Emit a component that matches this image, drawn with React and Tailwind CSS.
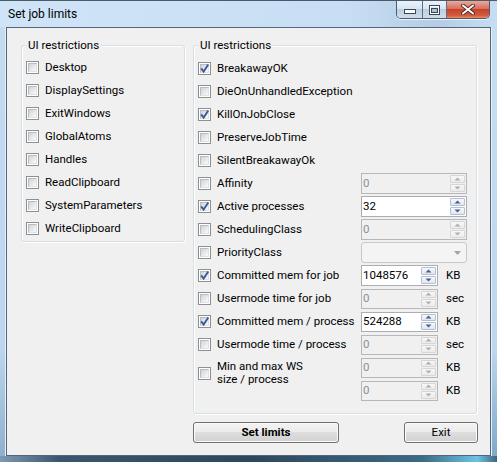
import React from 'react';

function Check({ on }) {
  return (
    <span className="relative block w-[13px] h-[13px] shrink-0 border border-[#8e8f8f] bg-white p-[1px]">
      <span className="block w-full h-full border border-t-[#b9bdc3] border-l-[#b9bdc3] border-r-[#dfe1e4] border-b-[#dfe1e4] bg-[linear-gradient(135deg,#cfd3d8_0%,#e7e9ec_55%,#fafafa_100%)]" />
      {on && (
        <svg className="absolute -left-px -top-px" width="13" height="13" viewBox="0 0 13 13">
          <path d="M3.2 6.4 L5.6 9.6 L10.3 2.6" fill="none" stroke="#3b5797" strokeWidth="1.8" strokeLinejoin="miter" />
        </svg>
      )}
    </span>
  );
}

function Arrow({ up, on }) {
  return (
    <span
      className={`flex-1 flex items-center justify-center rounded-[1px] border ${
        on
          ? 'border-[#b4c0d2] bg-[linear-gradient(to_bottom,#f7f9fc,#dfe6ef)]'
          : 'border-[#d6d6d6] bg-[linear-gradient(to_bottom,#f8f8f8,#ebebeb)]'
      }`}
    >
      <svg width="7" height="4" viewBox="0 0 7 4">
        <path d={up ? 'M0.5 3.5 L3.5 0.5 L6.5 3.5Z' : 'M0.5 0.5 L6.5 0.5 L3.5 3.5Z'} fill={on ? '#4a5f8c' : '#b0b0b0'} />
      </svg>
    </span>
  );
}

function Spin({ v, on, narrow, tall }) {
  return (
    <div
      className={`flex ${narrow ? 'w-[77px]' : 'w-[106px]'} ${tall ? 'h-[21px]' : 'h-[20px]'} border ${
        on ? 'border-[#abadb3] bg-white text-black' : 'border-[#b7b7b7] bg-[#f0f0f0] text-[#8f8f8f]'
      }`}
    >
      <span className="flex-1 pl-[1px] flex items-center">{v}</span>
      <span className="flex flex-col w-[15px] mr-[1px] my-[1px] gap-[1px]">
        <Arrow up on={on} />
        <Arrow on={on} />
      </span>
    </div>
  );
}

function Combo() {
  return (
    <div className="w-[106px] h-[21px] rounded-[3px] border border-[#c8c8c8] bg-[#f4f4f4] flex items-center justify-end pr-[5px]">
      <svg width="7" height="4" viewBox="0 0 7 4">
        <path d="M0 0 L7 0 L3.5 4Z" fill="#a3a3a3" />
      </svg>
    </div>
  );
}

function Row({ label, on, children, unit }) {
  return (
    <div className="flex items-center h-[23px]">
      <Check on={on} />
      <span className="ml-[6px] w-[144px] whitespace-nowrap">{label}</span>
      {children}
      {unit && <span className="ml-[8px]">{unit}</span>}
    </div>
  );
}

function Group({ className, children }) {
  return (
    <div className={`relative border border-[#d5dfe5] rounded-[3px] shadow-[inset_1px_1px_0_#ffffff,1px_1px_0_#ffffff] ${className}`}>
      <span className="absolute -top-[9px] left-[4px] px-[2px] leading-[16px] bg-[#f0f0f0] whitespace-nowrap">UI restrictions</span>
      {children}
    </div>
  );
}

const leftItems = ['Desktop', 'DisplaySettings', 'ExitWindows', 'GlobalAtoms', 'Handles', 'ReadClipboard', 'SystemParameters', 'WriteClipboard'];

const btnBase =
  'h-[21px] rounded-[3px] border border-[#707070] bg-[linear-gradient(to_bottom,#f3f3f3_0%,#ececec_45%,#dedede_50%,#d0d0d0_100%)] shadow-[inset_0_0_0_1px_#fbfbfb] text-black flex items-center justify-center';

export default function App() {
  return (
    <div className="w-[497px] h-[462px] flex flex-col border-t border-[#4b5a69] bg-[linear-gradient(to_bottom,#cbe1f5_0%,#c2dbf1_40%,#b9d4ec_100%)] font-['Roboto',sans-serif] text-[11.5px] text-black overflow-hidden">
      {/* title bar */}
      <div className="h-[26px] flex justify-between items-start bg-[linear-gradient(to_right,#cfe4f7_0%,#c8def4_70%,#b4cde4_88%,#c6def3_100%)]">
        <span className="ml-[8px] mt-[5px] leading-[16px] text-[12px]">Set job limits</span>
        <div className="mr-[7px] flex h-[18px] rounded-b-[5px] border border-t-0 border-[#4c5c6d] overflow-hidden shadow-[0_1px_0_rgba(255,255,255,0.75)]">
          <div className="w-[26px] flex items-end justify-center pb-[4px] border-r border-[#5f6f80] bg-[linear-gradient(to_bottom,#eaf2fa_0%,#d8e6f3_45%,#bccfe1_50%,#cddded_100%)]">
            <svg width="12" height="5" viewBox="0 0 12 5">
              <rect x="0.5" y="0.5" width="11" height="4" fill="#ffffff" stroke="#3a4756" />
            </svg>
          </div>
          <div className="w-[24px] flex items-center justify-center border-r border-[#5f6f80] bg-[linear-gradient(to_bottom,#eaf2fa_0%,#d8e6f3_45%,#bccfe1_50%,#cddded_100%)]">
            <svg width="11" height="10" viewBox="0 0 11 10">
              <rect x="0.5" y="0.5" width="10" height="9" fill="none" stroke="#3a4756" />
              <rect x="1.5" y="1.5" width="8" height="7" fill="none" stroke="#ffffff" />
              <rect x="2.5" y="3.5" width="6" height="4" fill="#aebfd0" stroke="#3a4756" />
            </svg>
          </div>
          <div className="w-[42px] flex items-center justify-center bg-[linear-gradient(to_bottom,#e9a99c_0%,#d6705c_45%,#c5432b_50%,#d45b3f_85%,#e88a6f_100%)]">
            <svg width="14" height="11" viewBox="0 0 14 11">
              <path d="M2 1.5 L12 9.5 M12 1.5 L2 9.5" stroke="#4a2a24" strokeWidth="3.6" strokeLinecap="square" />
              <path d="M2 1.5 L12 9.5 M12 1.5 L2 9.5" stroke="#ffffff" strokeWidth="1.8" strokeLinecap="square" />
            </svg>
          </div>
        </div>
      </div>

      {/* middle */}
      <div className="flex-1 flex">
        <div className="w-[6px] bg-[linear-gradient(to_bottom,#c4dcf2_0%,#bcd6ee_75%,#8fb0cc_100%)] border-r border-[#e4f0fa]" />
        <div className="flex-1 border border-[#55657a] bg-[#f0f0f0]">
          <div className="pl-[14px] pt-[17px] grid grid-cols-[164px_285px] gap-x-[8px] items-start">
            <Group className="w-[164px] pt-[10px] pl-[4px] pb-[1px]">
              {leftItems.map((t) => (
                <div key={t} className="flex items-center h-[23px]">
                  <Check />
                  <span className="ml-[6px] whitespace-nowrap">{t}</span>
                </div>
              ))}
            </Group>

            <Group className="w-[284px] pt-[11px] pl-[4px] pb-[11px]">
              <Row label="BreakawayOK" on />
              <Row label="DieOnUnhandledException" />
              <Row label="KillOnJobClose" on />
              <Row label="PreserveJobTime" />
              <Row label="SilentBreakawayOk" />
              <Row label="Affinity">
                <Spin v="0" tall />
              </Row>
              <Row label="Active processes" on>
                <Spin v="32" on tall />
              </Row>
              <Row label="SchedulingClass">
                <Spin v="0" tall />
              </Row>
              <Row label="PriorityClass">
                <Combo />
              </Row>
              <Row label="Committed mem for job" on unit="KB">
                <Spin v="1048576" on narrow tall />
              </Row>
              <Row label="Usermode time for job" unit="sec">
                <Spin v="0" narrow />
              </Row>
              <Row label="Committed mem / process" on unit="KB">
                <Spin v="524288" on narrow />
              </Row>
              <Row label="Usermode time / process" unit="sec">
                <Spin v="0" narrow />
              </Row>
              <div className="flex h-[46px]">
                <div className="flex items-center h-[26px] mt-[4px]">
                  <Check />
                  <span className="ml-[6px] w-[144px] leading-[13px]">
                    Min and max WS
                    <br />
                    size / process
                  </span>
                </div>
                <div className="flex flex-col">
                  <div className="flex items-center h-[23px]">
                    <Spin v="0" narrow />
                    <span className="ml-[8px]">KB</span>
                  </div>
                  <div className="flex items-center h-[23px]">
                    <Spin v="0" narrow />
                    <span className="ml-[8px]">KB</span>
                  </div>
                </div>
              </div>
            </Group>

            <div />
            <div className="mt-[8px] flex justify-between">
              <button className={`${btnBase} w-[146px] font-bold`}>Set limits</button>
              <button className={`${btnBase} w-[74px]`}>Exit</button>
            </div>
          </div>
        </div>
        <div className="w-[6px] bg-[linear-gradient(to_bottom,#c6def3_0%,#bdd7ef_75%,#7fa9c8_100%)] border-l border-[#e4f0fa]" />
      </div>

      {/* bottom frame */}
      <div className="h-[6px] bg-[linear-gradient(to_right,#7c9ab3_0%,#3a566e_12%,#2d475c_50%,#3a6a86_85%,#6cc3e6_96%,#40657e_100%)]" />
    </div>
  );
}
